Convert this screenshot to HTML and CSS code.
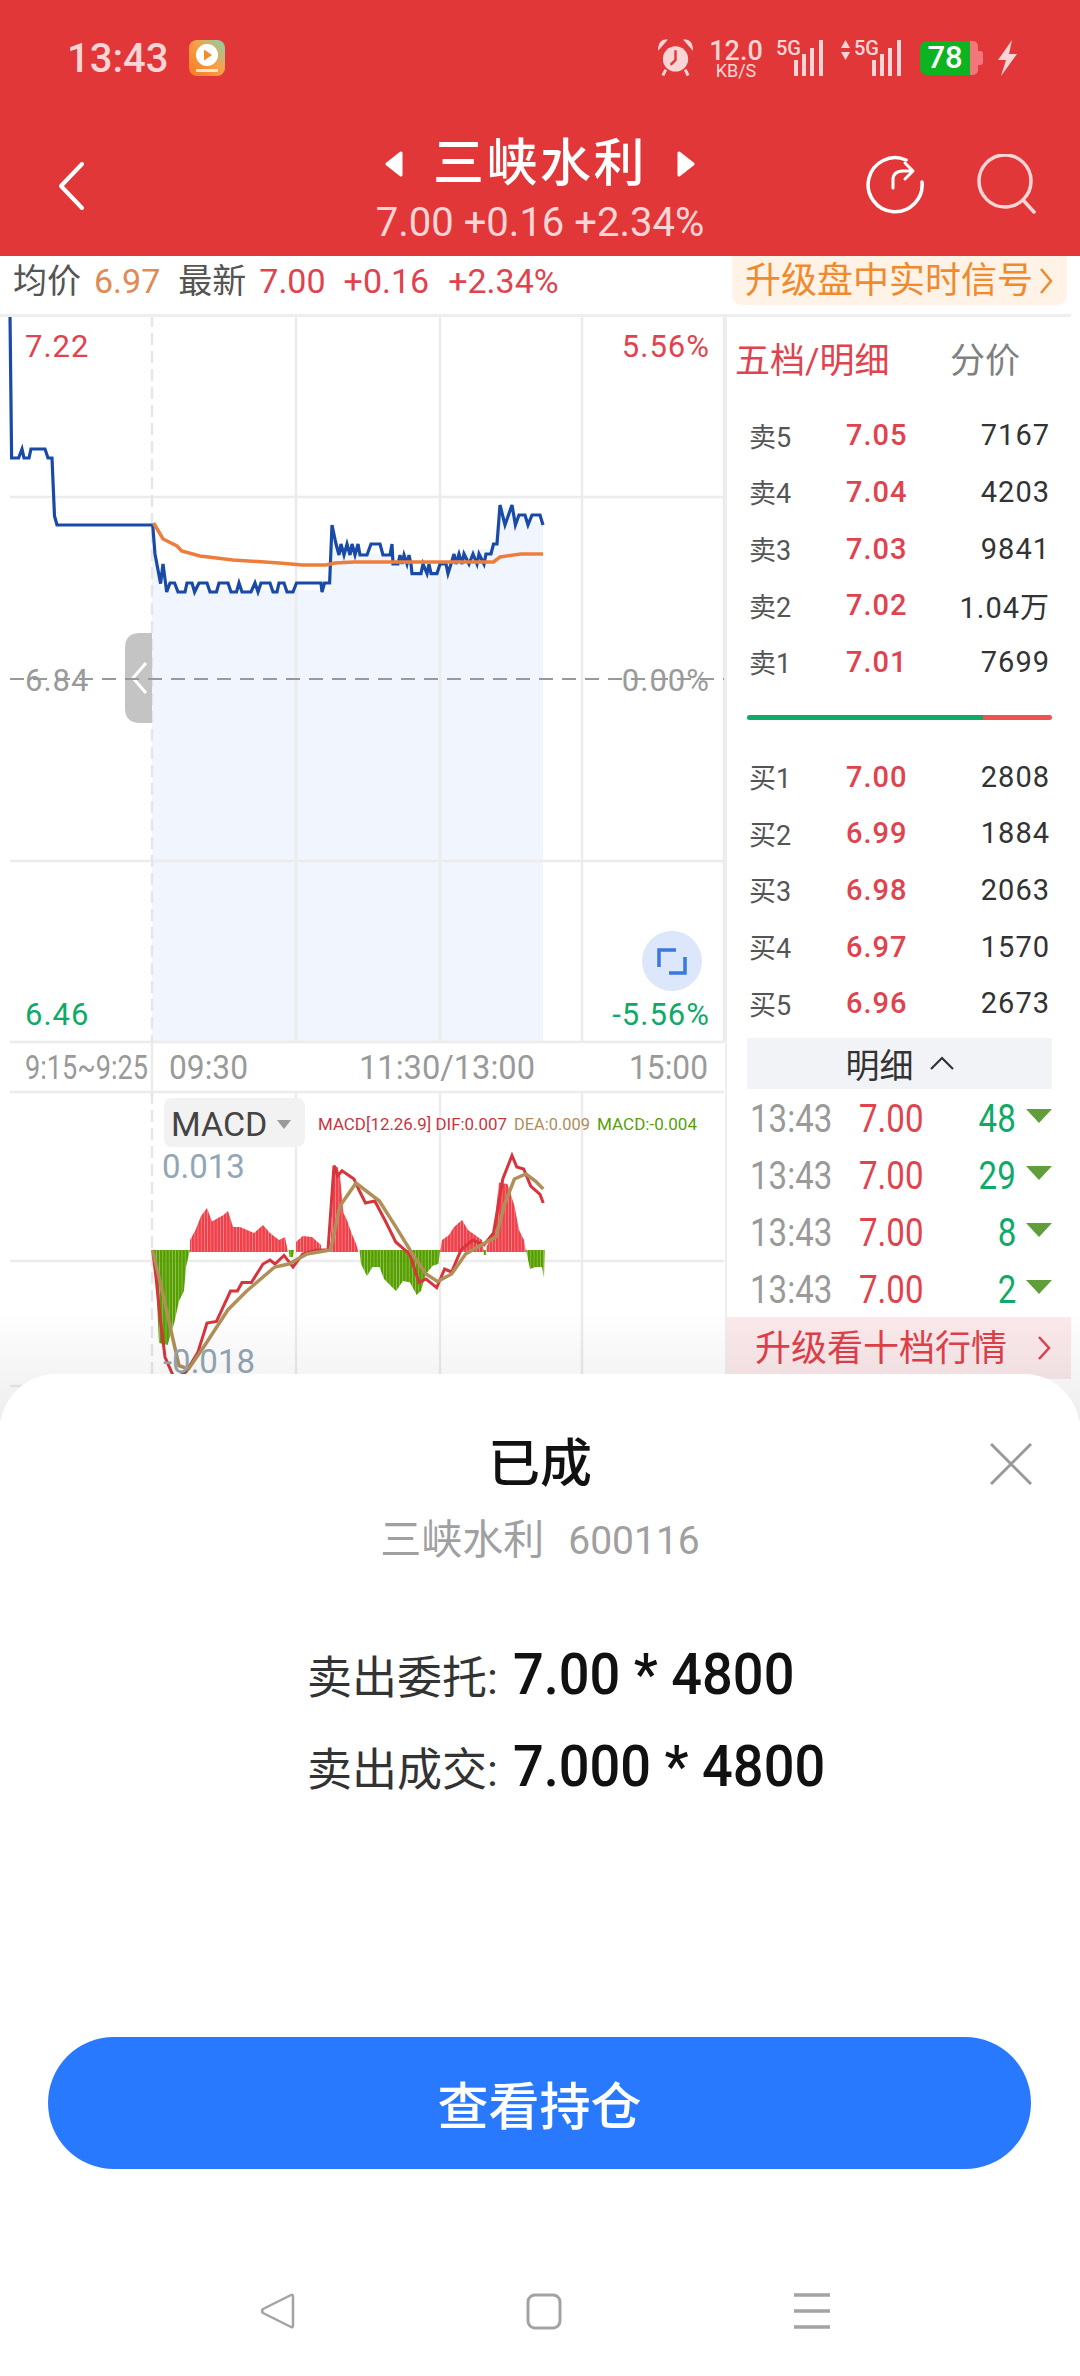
FILE: index.html
```html
<!DOCTYPE html>
<html lang="zh-CN">
<head>
  <meta charset="UTF-8" />
  <meta name="viewport" content="width=device-width, initial-scale=1.0"/>
  <title>三峡水利</title>
  <link rel="stylesheet" href="styles.css">
</head>
<body>
  <!-- Red top: status bar and stock title -->
  <header class="top">
    <div class="status">
      <span class="clock">13:43</span>
      <svg class="app-icon" width="36" height="36" viewBox="0 0 36 36">
        <defs>
          <linearGradient id="appGrad" x1="1" y1="0" x2="0" y2="1">
            <stop offset="0" stop-color="#7fd6b0"/>
            <stop offset="0.45" stop-color="#f7a04a"/>
            <stop offset="1" stop-color="#f57a22"/>
          </linearGradient>
        </defs>
        <rect width="36" height="36" rx="8" fill="url(#appGrad)"/>
        <circle cx="18" cy="15" r="11" fill="#fff"/>
        <path d="M15 9.5 L23 15 L15 20.5 Z" fill="#f58a2a"/>
        <rect x="7" y="29" width="22" height="3" fill="#ffe3c8"/>
      </svg>
      <div class="status-right">
        <svg width="35" height="38" viewBox="0 0 36 38">
          <path d="M1 9 L8 1 Q2 1 1 9 Z M35 9 L28 1 Q34 1 35 9 Z" fill="#fbd5d5" stroke="#fbd5d5" stroke-width="2"/>
          <circle cx="18" cy="20" r="13" fill="#fbd5d5"/>
          <path d="M18 11 V21 L13 26" fill="none" stroke="#e23739" stroke-width="2.5"/>
          <path d="M8 31 L5 37 M28 31 L31 37" stroke="#fbd5d5" stroke-width="3"/>
        </svg>
        <div class="speed"><b>12.0</b><small>KB/S</small></div>
        <div class="signal">
          <span class="net">5G</span>
          <svg width="39" height="36" viewBox="0 0 39 36">
            <path d="M11 20 V36 M19 14 V36 M27 8 V36 M36 0 V36" stroke="#fbd5d5" stroke-width="4"/>
          </svg>
        </div>
        <div class="signal signal-two">
          <svg class="updown" width="9" height="20" viewBox="0 0 9 20"><path d="M4.5 0 L9 8 H0 Z M0 12 H9 L4.5 20 Z" fill="#fbd5d5"/></svg>
          <span class="net">5G</span>
          <svg width="39" height="36" viewBox="0 0 39 36">
            <path d="M11 20 V36 M19 14 V36 M27 8 V36 M36 0 V36" stroke="#fbd5d5" stroke-width="4"/>
          </svg>
        </div>
        <div class="battery"><span class="battery-fill">78</span><span class="battery-rest"></span><span class="battery-cap"></span></div>
        <svg width="21" height="36" viewBox="0 0 21 36"><path d="M15 0 L1 20 H9 L4 36 L20 14 H12 Z" fill="#fbd5d5"/></svg>
      </div>
    </div>
    <div class="title-bar">
      <svg class="back" width="28" height="48" viewBox="0 0 28 48"><path d="M25 2 L4 24 L25 46" fill="none" stroke="#fff" stroke-width="4" stroke-linecap="round" stroke-linejoin="round"/></svg>
      <div class="title-main">
        <div class="title-row">
          <svg width="18" height="26" viewBox="0 0 18 26"><path d="M16 2 V24 L2 13 Z" fill="#fff" stroke="#fff" stroke-width="3" stroke-linejoin="round"/></svg>
          <h1>三峡水利</h1>
          <svg width="18" height="26" viewBox="0 0 18 26"><path d="M2 2 V24 L16 13 Z" fill="#fff" stroke="#fff" stroke-width="3" stroke-linejoin="round"/></svg>
        </div>
        <div class="title-sub">7.00 +0.16 +2.34%</div>
      </div>
      <div class="title-tools">
        <svg width="60" height="60" viewBox="0 0 60 60">
          <path d="M40 6 A27 27 0 1 0 56 28" fill="none" stroke="#fff" stroke-width="3.5" stroke-linecap="round"/>
          <path d="M27 34 V26 Q27 17 37 17 H46 M39 9 L47 17 L39 25" fill="none" stroke="#fff" stroke-width="3" stroke-linecap="round" stroke-linejoin="round"/>
        </svg>
        <svg width="60" height="60" viewBox="0 0 60 60">
          <circle cx="28" cy="27" r="26" fill="none" stroke="#fbd5d5" stroke-width="3.5"/>
          <path d="M46 46 L57 58" stroke="#fbd5d5" stroke-width="3.5" stroke-linecap="round"/>
        </svg>
      </div>
    </div>
  </header>

  <!-- Average / latest line -->
  <div class="info-row">
    <span class="info-label">均价</span><span class="info-num orange">6.97</span>
    <span class="info-label info-gap-sm">最新</span><span class="info-num red">7.00</span>
    <span class="info-num red info-gap-sm">+0.16</span>
    <span class="info-num red info-gap">+2.34%</span>
    <div class="promo-badge">升级盘中实时信号<svg width="14" height="30" viewBox="0 0 14 30"><path d="M2 3 L12 15 L2 27" fill="none" stroke="#f08a2c" stroke-width="2.5"/></svg></div>
  </div>

  <main class="market">
    <!-- viewBox is in page coordinates so the chart points are easy to read off -->
    <svg class="chart" width="725" height="1100" viewBox="0 317 725 1100">
      <defs>
        <pattern id="redBars" width="3.2" height="10" patternUnits="userSpaceOnUse"><rect width="2.9" height="10" fill="#f0404a"/></pattern>
        <pattern id="greenBars" width="3.2" height="10" patternUnits="userSpaceOnUse"><rect width="2.9" height="10" fill="#55a000"/></pattern>
      </defs>

      <polygon class="area" points="152,525 160,584 166,590 330,590 332,525 340,550 392,555 412,570 450,570 454,552 493,548 500,505 543,525 543,1042 152,1042"/>

      <g class="grid">
        <path d="M10 315 H724 M10 497 H724 M10 861 H724 M10 1042 H724 M10 1092 H724 M10 1261 H724 M10 1386 H724"/>
        <path d="M296 315 V1042 M440 315 V1042 M582 315 V1042 M724 315 V1042 M296 1092 V1400 M440 1092 V1400 M582 1092 V1400 M152 1042 V1092"/>
      </g>
      <path class="grid-dash" d="M152 315 V1042 M152 1092 V1400"/>

      <text class="axis red" x="25" y="357">7.22</text>
      <text class="axis red end" x="710" y="357">5.56%</text>
      <text class="axis gray" x="25" y="691">6.84</text>
      <text class="axis gray end" x="710" y="691">0.00%</text>
      <text class="axis green" x="25" y="1025">6.46</text>
      <text class="axis green end" x="710" y="1025">-5.56%</text>

      <path class="zero-line" d="M10 679 H724"/>

      <polyline class="price-line" points="10,315 11.6,458 18.6,458 22,449 24,458 29,458 31,449 45,449 48,458 52,458 54.5,516 57,525 152.7,525 155,554 160.6,583.6 163,564 166.7,592 170,583 174.6,583 178,592 185,592 187,583 192,583 194.6,592 199,583 207,583 210,592 216.5,592 219,583 228,583 231,592 236.5,592 239,583 242,592 251,592 255,583 258,592 261,583 270,583 273,592 277,592 279,583 284,583 287,592 293,592 296.5,583 321,583 322,592 324.5,583 329.6,583 332,525 336,544 339,555 341,544 344,555 347,544 350,555 352,544 355,555 358,544 360,555 367,555 371,544 380,544 383,555 390,555 392,544 393,564 398,564 400,555 402,564 404,555 407,564 409,555 411,564 412,573.6 421,573.6 423,564 427,573.6 429,564 431,573.6 437,573.6 440,564 446,564 448,573.6 451,564 454,554 456,564 459,554 462,564 464,554 469,564 473,554 477,564 479,554 484,564 486,554 491,554 493.5,544 497,544 500,505 505,525 512,505 515.4,525 519,515 525,515 528,525 532,515 540,515 543,525"/>
      <polyline class="avg-line" points="153.6,523 163,539 177,546 181.6,551 200,556 233,560 279,563 302.6,565 326,565 335,563 354,562 493.5,562 500,557 521,554 543,554"/>

      <path class="handle" d="M152 633 H140 Q125 633 125 648 V708 Q125 723 140 723 H152 Z"/>
      <path class="handle-arrow" d="M146 663 L133 678 L146 693"/>
      <path class="zero-line" d="M125 679 H152"/>

      <circle class="expand-bg" cx="672" cy="961" r="30"/>
      <path class="expand-icon" d="M659 967 V950 H676 M685 957 V973 H669"/>

      <text class="time-label" x="25" y="1079" textLength="123" lengthAdjust="spacingAndGlyphs">9:15~9:25</text>
      <text class="time-label" x="169" y="1079" textLength="79" lengthAdjust="spacingAndGlyphs">09:30</text>
      <text class="time-label" x="359" y="1079" textLength="176" lengthAdjust="spacingAndGlyphs">11:30/13:00</text>
      <text class="time-label" x="629" y="1079" textLength="79" lengthAdjust="spacingAndGlyphs">15:00</text>

      <rect class="macd-pill" x="164" y="1098" width="141" height="49" rx="8"/>
      <text class="macd-name" x="171" y="1136">MACD</text>
      <path class="macd-caret" d="M277 1120 H291 L284 1129 Z"/>
      <text class="macd-legend leg-dif" x="318" y="1130" textLength="189" lengthAdjust="spacingAndGlyphs">MACD[12.26.9] DIF:0.007</text>
      <text class="macd-legend leg-dea" x="514" y="1130" textLength="76" lengthAdjust="spacingAndGlyphs">DEA:0.009</text>
      <text class="macd-legend leg-macd" x="597" y="1130" textLength="100" lengthAdjust="spacingAndGlyphs">MACD:-0.004</text>

      <g fill="url(#redBars)">
        <polygon points="190,1252 190,1240 195.5,1230 201,1216 207,1208 212,1221.5 218,1218 223.5,1215 228,1211 233,1227 240,1227 247,1230 254,1233 263,1225 270,1233 279,1240 285,1237 288,1252"/>
        <polygon points="296,1252 296,1242 302.6,1236 312,1237 321,1245 321,1252"/>
        <polygon points="330.5,1252 330.5,1247 334,1166 337.5,1167 340,1176 343.5,1213 347,1220 351.5,1233 356,1243.5 358.5,1252"/>
        <polygon points="440,1252 442,1240 449,1235 454,1227 462,1220 468,1230 475,1235 482,1240 484,1252"/>
        <polygon points="486.5,1252 486.5,1247 493.5,1233 499,1182.5 507.5,1184 514.5,1206 519,1230 524,1240 526,1252"/>
      </g>
      <g fill="url(#greenBars)">
        <polygon points="152.7,1250 156,1281 159,1343 167.6,1345 174.6,1321.5 179,1301 184,1291 186,1267 190,1250"/>
        <polygon points="288.6,1250 289.6,1257 293,1257 294,1250"/>
        <polygon points="359.5,1250 361,1264 367,1276 372.5,1267 379.4,1267 384,1279 396,1291 403,1281 410,1282.5 416.7,1295 421,1291 426,1274 433,1265.6 438.5,1264 440,1250"/>
        <polygon points="483.5,1250 484,1255 486,1255 486,1250"/>
        <polygon points="526,1250 530,1269 535.4,1267 542,1267 544,1278 544.7,1250"/>
      </g>
      <polyline class="dif-line" points="152.7,1250 156,1277.5 160.6,1321.5 165,1357 174.6,1379 186,1372 198,1352 207,1323 216.5,1321.5 230.5,1291 237.4,1291 242,1282.5 251.4,1282.5 263,1264 270,1260 275,1264 284,1255.4 293,1267 302.6,1254 316.6,1250 328,1250 334,1165.6 337.5,1176 342,1170.7 354,1179 358.5,1189 365.5,1203 374.8,1201 386.4,1223 395.7,1242 409.7,1254 419,1282.5 426,1279 436.7,1287.6 444.6,1269 451.6,1272 461,1250 472.5,1240 484,1245 493.5,1233 502.8,1179 512,1155.4 516.8,1167 523.7,1169 530.7,1186 540,1194.4 543.3,1203"/>
      <polyline class="dea-line" points="152.7,1250 163,1294.4 172,1335 179,1365.6 188.5,1369 205,1345 228,1309.7 246.7,1291 274.7,1267 288.6,1264 307,1254 330.5,1250 340,1206 356,1183 379.4,1201 395.7,1226.6 414.3,1257 426,1274 437.6,1281.5 451.6,1274 465.6,1254 484,1243.6 495.8,1237 505,1203 514.4,1179 526,1174 535.4,1181 543.3,1189"/>
      <text class="macd-scale" x="162" y="1178">0.013</text>
      <text class="macd-scale" x="163" y="1373">-0.018</text>
    </svg>

    <aside class="quote">
      <div class="quote-tabs"><span class="tab-active">五档/明细</span><span class="tab-plain">分价</span></div>

      <div class="book-row"><span class="book-label">卖5</span><span class="book-price">7.05</span><span class="book-qty">7167</span></div>
      <div class="book-row"><span class="book-label">卖4</span><span class="book-price">7.04</span><span class="book-qty">4203</span></div>
      <div class="book-row"><span class="book-label">卖3</span><span class="book-price">7.03</span><span class="book-qty">9841</span></div>
      <div class="book-row"><span class="book-label">卖2</span><span class="book-price">7.02</span><span class="book-qty">1.04万</span></div>
      <div class="book-row"><span class="book-label">卖1</span><span class="book-price">7.01</span><span class="book-qty">7699</span></div>

      <div class="ratio-bar"><div class="ratio-buy"></div><div class="ratio-sell"></div></div>

      <div class="book-row"><span class="book-label">买1</span><span class="book-price">7.00</span><span class="book-qty">2808</span></div>
      <div class="book-row"><span class="book-label">买2</span><span class="book-price">6.99</span><span class="book-qty">1884</span></div>
      <div class="book-row"><span class="book-label">买3</span><span class="book-price">6.98</span><span class="book-qty">2063</span></div>
      <div class="book-row"><span class="book-label">买4</span><span class="book-price">6.97</span><span class="book-qty">1570</span></div>
      <div class="book-row"><span class="book-label">买5</span><span class="book-price">6.96</span><span class="book-qty">2673</span></div>

      <div class="detail-head">明细<svg width="24" height="14" viewBox="0 0 24 14"><path d="M1 13 L12 2 L23 13" fill="none" stroke="#333" stroke-width="2.2"/></svg></div>

      <div class="tick-row"><span class="tick-time">13:43</span><span class="tick-price">7.00</span><span class="tick-qty">48</span><i class="tick-down"></i></div>
      <div class="tick-row"><span class="tick-time">13:43</span><span class="tick-price">7.00</span><span class="tick-qty">29</span><i class="tick-down"></i></div>
      <div class="tick-row"><span class="tick-time">13:43</span><span class="tick-price">7.00</span><span class="tick-qty">8</span><i class="tick-down"></i></div>
      <div class="tick-row"><span class="tick-time">13:43</span><span class="tick-price">7.00</span><span class="tick-qty">2</span><i class="tick-down"></i></div>

      <div class="upgrade">升级看十档行情<svg width="14" height="28" viewBox="0 0 14 28"><path d="M2 3 L12 14 L2 25" fill="none" stroke="#e0404a" stroke-width="2.5"/></svg></div>
    </aside>
  </main>

  <div class="scrim"></div>

  <!-- Bottom sheet -->
  <section class="sheet">
    <button class="sheet-close" aria-label="关闭">
      <svg width="42" height="42" viewBox="0 0 42 42"><path d="M1 1 L41 41 M41 1 L1 41" stroke="#999" stroke-width="3"/></svg>
    </button>
    <h2 class="sheet-title">已成</h2>
    <p class="sheet-sub">三峡水利<span class="sheet-code">600116</span></p>
    <div class="deal-list">
      <p class="deal"><span class="deal-label">卖出委托:</span><span class="deal-value">7.00 * 4800</span></p>
      <p class="deal"><span class="deal-label">卖出成交:</span><span class="deal-value">7.000 * 4800</span></p>
    </div>
    <button class="btn-primary">查看持仓</button>
    <nav class="navbar">
      <svg width="36" height="38" viewBox="0 0 36 38"><path d="M32 3 Q34 2 34 5 V33 Q34 36 32 35 L4 21 Q2 19 4 17 Z" fill="none" stroke="#a3a3a3" stroke-width="2.5" stroke-linejoin="round"/></svg>
      <svg width="36" height="38" viewBox="0 0 36 38"><rect x="2" y="3" width="32" height="33" rx="7" fill="none" stroke="#a3a3a3" stroke-width="3"/></svg>
      <svg width="38" height="38" viewBox="0 0 38 38"><path d="M1 3 H37 M1 19 H37 M1 35 H37" stroke="#a3a3a3" stroke-width="3.5"/></svg>
    </nav>
  </section>
</body>
</html>
```

FILE: styles.css
```css
* {
  box-sizing: border-box;
}
body {
  margin: 0;
  width: 1080px;
  height: 2376px;
  position: relative;
  overflow: hidden;
  background: #fff;
  font-family: Roboto, "Noto Sans CJK SC", sans-serif;
  color: #333;
}
h1, h2, p {
  margin: 0;
  font-weight: normal;
}
button {
  font-family: inherit;
  border: none;
  padding: 0;
  background: none;
}

/* header */
.top {
  height: 256px;
  background: #e23739;
  color: #fff;
}
.status {
  height: 116px;
  padding: 0 62px 0 67px;
  display: flex;
  align-items: center;
}
.clock {
  font-size: 40px;
  font-weight: 500;
  color: #fbd5d5;
  width: 122px;
}
.app-icon {
  display: block;
}
.status-right {
  margin-left: auto;
  display: flex;
  align-items: center;
  gap: 14px;
}
.speed {
  display: flex;
  flex-direction: column;
  align-items: center;
  color: #fbd5d5;
  width: 52px;
  margin-left: 3px;
}
.speed b {
  font-size: 27px;
  font-weight: 500;
  line-height: 26px;
}
.speed small {
  font-size: 18px;
  line-height: 14px;
}
.signal {
  display: flex;
  align-items: flex-start;
  position: relative;
  color: #fbd5d5;
  padding-left: 9px;
}
.signal-two {
  padding-left: 22px;
  margin-left: 3px;
}
.net {
  position: absolute;
  left: 0;
  top: -4px;
  font-size: 20px;
  font-weight: 500;
}
.signal-two .net {
  left: 13px;
}
.updown {
  position: absolute;
  left: 0;
  top: 0;
}
.battery {
  display: flex;
  align-items: center;
  width: 63px;
  margin-left: 4px;
}
.battery-fill {
  width: 50px;
  height: 34px;
  background: #0db320;
  border-radius: 7px 0 0 7px;
  color: #fff;
  font-size: 31px;
  font-weight: 500;
  line-height: 34px;
  text-align: center;
}
.battery-rest {
  width: 8px;
  height: 34px;
  background: #f2777a;
  border-radius: 0 5px 5px 0;
}
.battery-cap {
  width: 5px;
  height: 14px;
  background: #f2777a;
  border-radius: 0 3px 3px 0;
}
.title-bar {
  height: 140px;
  display: flex;
  position: relative;
  justify-content: center;
}
.back {
  position: absolute;
  left: 57px;
  top: 46px;
}
.title-main {
  display: flex;
  flex-direction: column;
  align-items: center;
}
.title-row {
  display: flex;
  align-items: center;
  gap: 30px;
  height: 72px;
  margin-top: 12px;
}
.title-row h1 {
  font-size: 51px;
  font-weight: 500;
  letter-spacing: 2.5px;
  line-height: 72px;
}
.title-sub {
  font-size: 40px;
  line-height: 46px;
  color: #fbd5d5;
}
.title-tools {
  position: absolute;
  right: 43px;
  top: 38px;
  display: flex;
  gap: 51px;
}

/* info row */
.info-row {
  height: 58px;
  display: flex;
  align-items: flex-start;
  padding-left: 13px;
  position: relative;
}
.info-label {
  font-size: 34px;
  line-height: 50px;
  color: #555;
  margin-right: 13px;
}
.info-num {
  font-size: 34px;
  line-height: 50px;
}
.info-gap {
  margin-left: 19px;
}
.info-gap-sm {
  margin-left: 18px;
}
.orange {
  color: #e08a55;
}
.red {
  color: #e0434e;
  fill: #e0434e;
}
.green {
  fill: #0fa968;
}
.gray {
  fill: #9a9a9a;
}
.promo-badge {
  margin-left: auto;
  margin-right: 13px;
  width: 335px;
  height: 49px;
  background: #fff3e8;
  border-radius: 0 0 10px 10px;
  padding-left: 13px;
  font-size: 36px;
  line-height: 50px;
  color: #f08a2c;
  display: flex;
  align-items: center;
  white-space: nowrap;
  gap: 6px;
}

/* main area */
.market {
  display: flex;
  border-top: 3px solid #eee;
  height: 1100px;
  overflow: hidden;
  margin-right: 9px;
}
.chart {
  display: block;
  flex: none;
}
.area {
  fill: #f0f5fe;
}
.grid path {
  fill: none;
  stroke: #ececec;
  stroke-width: 2.5;
}
.grid-dash {
  fill: none;
  stroke: #e6e6e6;
  stroke-width: 2.5;
  stroke-dasharray: 12 6;
}
.zero-line {
  stroke: #999;
  stroke-width: 2;
  stroke-dasharray: 14 9;
}
.axis {
  font-size: 31px;
  letter-spacing: 1px;
}
.end {
  text-anchor: end;
}
.price-line {
  fill: none;
  stroke: #1a4aa8;
  stroke-width: 3.2;
}
.avg-line {
  fill: none;
  stroke: #ee7d3c;
  stroke-width: 3.5;
}
.handle {
  fill: #c4c4c4;
}
.handle-arrow {
  fill: none;
  stroke: #fff;
  stroke-width: 3;
}
.expand-bg {
  fill: #dce7fb;
}
.expand-icon {
  fill: none;
  stroke: #3a78e0;
  stroke-width: 3.5;
}
.time-label {
  font-size: 33px;
  fill: #9a9a9a;
}
.macd-pill {
  fill: #f2f2f2;
}
.macd-name {
  font-size: 34px;
  fill: #444;
}
.macd-caret {
  fill: #9a9a9a;
}
.macd-legend {
  font-size: 17px;
}
.leg-dif {
  fill: #c8363f;
}
.leg-dea {
  fill: #b08d5b;
}
.leg-macd {
  fill: #5a9e0a;
}
.macd-scale {
  font-size: 33px;
  fill: #93a6b5;
}
.dif-line {
  fill: none;
  stroke: #d8343c;
  stroke-width: 3;
}
.dea-line {
  fill: none;
  stroke: #b09058;
  stroke-width: 3.5;
}

/* order book */
.quote {
  flex: 1;
  min-width: 0;
  border-left: 2px solid #eee;
}
.quote-tabs {
  display: flex;
  padding: 22px 0 22px 8px;
  font-size: 35px;
  line-height: 46px;
}
.tab-active {
  color: #e0434e;
  width: 215px;
}
.tab-plain {
  color: #808080;
}
.book-row {
  height: 56.67px;
  padding: 0 21px 0 22px;
  display: grid;
  grid-template-columns: 97px 1fr auto;
  align-items: center;
  font-size: 29px;
  letter-spacing: 1px;
}
.book-label {
  color: #555;
  font-size: 27px;
  letter-spacing: 0;
  white-space: nowrap;
}
.book-price {
  color: #e0434e;
  font-weight: 500;
}
.book-qty {
  color: #333;
}
.ratio-bar {
  display: flex;
  height: 5px;
  margin: 25px 19px 28px 20px;
  border-radius: 3px;
  overflow: hidden;
}
.ratio-buy {
  width: 236px;
  background: #0fa968;
}
.ratio-sell {
  flex: 1;
  background: #ef5350;
}
.detail-head {
  height: 51px;
  margin: 6px 19px 0 20px;
  background: #f1f3f7;
  display: flex;
  align-items: center;
  justify-content: center;
  gap: 16px;
  font-size: 34px;
  color: #333;
}
.tick-row {
  height: 57px;
  display: flex;
  align-items: center;
  padding: 3px 19px 0 23px;
  font-size: 38px;
}
/* the app's digits are a narrow DIN, no such font here */
.tick-time,
.tick-price {
  transform: scaleX(0.87);
  transform-origin: left center;
}
.tick-time {
  color: #9a9a9a;
  width: 109px;
}
.tick-price {
  color: #e0434e;
}
.tick-qty {
  margin-left: auto;
  color: #0fa968;
  transform: scaleX(0.87);
  transform-origin: right center;
}
.tick-down {
  margin-left: 10px;
  width: 0;
  height: 0;
  border-left: 13px solid transparent;
  border-right: 13px solid transparent;
  border-top: 14px solid #5f9e3a;
  margin-top: -6px;
}
.upgrade {
  height: 62px;
  background: #fbe9eb;
  color: #e0404a;
  font-size: 36px;
  line-height: 64px;
  padding-left: 28px;
  display: flex;
  align-items: flex-start;
  gap: 30px;
  white-space: nowrap;
}
.upgrade svg {
  margin-top: 17px;
}

/* scrim fade above the sheet */
.scrim {
  position: absolute;
  left: 0;
  right: 0;
  top: 1310px;
  height: 110px;
  background: linear-gradient(rgba(0, 0, 0, 0), rgba(0, 0, 0, 0.07));
}

/* bottom sheet */
.sheet {
  position: absolute;
  left: 0;
  right: 0;
  top: 1374px;
  bottom: 0;
  background: #fff;
  border-radius: 56px 56px 0 0;
  display: flex;
  flex-direction: column;
  align-items: center;
}
.sheet-close {
  position: absolute;
  right: 48px;
  top: 69px;
  line-height: 0;
}
.sheet-title {
  margin-top: 57px;
  font-size: 52px;
  line-height: 68px;
  font-weight: 500;
  color: #111;
}
.sheet-sub {
  margin-top: 13px;
  font-size: 41px;
  line-height: 56px;
  color: #a0a0a0;
}
.sheet-code {
  font-size: 39px;
  margin-left: 24px;
}
.deal-list {
  margin-top: 59px;
  align-self: flex-start;
  padding-left: 307px;
}
.deal {
  display: flex;
  align-items: center;
  height: 92px;
}
.deal-label {
  font-size: 45px;
  color: #333;
  width: 206px;
  white-space: nowrap;
}
.deal-value {
  font-size: 57px;
  font-weight: 500;
  color: #111;
  white-space: nowrap;
  transform: scaleX(0.95);
  transform-origin: left center;
}
.btn-primary {
  position: absolute;
  left: 48px;
  right: 49px;
  top: 663px;
  height: 132px;
  border-radius: 66px;
  background: #2979ff;
  color: #fff;
  font-size: 51px;
  font-weight: 500;
}
.navbar {
  position: absolute;
  left: 0;
  right: 0;
  top: 918px;
  display: flex;
  gap: 231px;
  justify-content: center;
  padding-left: 9px;
}
.navbar svg {
  display: block;
}
```
